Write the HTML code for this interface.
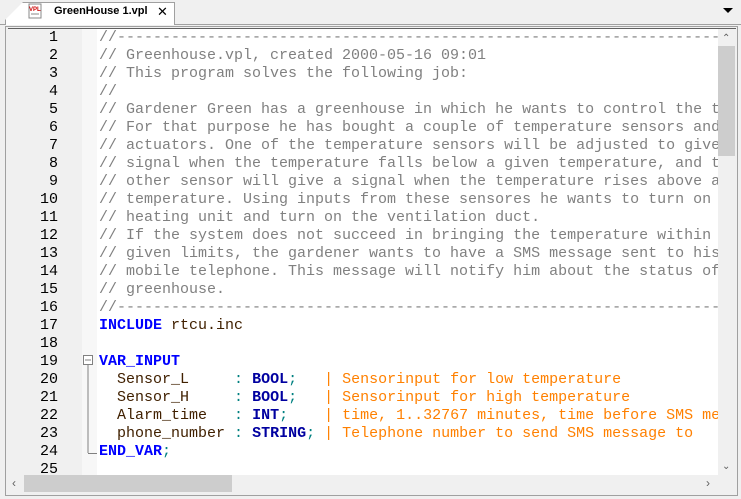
<!DOCTYPE html>
<html><head><style>
body{margin:0;width:741px;height:499px;background:#f0f0f0;position:relative;overflow:hidden;font-family:"Liberation Sans",sans-serif}
.tabbar{position:absolute;left:0;top:0;width:741px;height:24px;background:#f0f0f0;border-bottom:1px solid #a0a0a0}
.tab{position:absolute;left:5px;top:2px;width:168px;height:22px;background:#fff;border:1px solid #a0a0a0;border-bottom:none;clip-path:polygon(18px 0,100% 0,100% 100%,0 100%,0 18px)}
.tabtitle{position:absolute;left:54px;top:5px;font-size:11px;font-weight:bold;color:#000}
.x{position:absolute;left:157px;top:4px;font-size:13px}
.frame{position:absolute;left:5px;top:26px;width:731px;height:468px;border:1px solid #a0a0a0;background:#f0f0f0}
.gutter{position:absolute;left:8px;top:29px;width:74px;height:446px;background:#f0f0f0}
.fold{position:absolute;left:82px;top:29px;width:15px;height:446px;background:#f7f7f7}
.code{position:absolute;left:97px;top:29px;width:621px;height:446px;background:#fff;overflow:hidden}
.ln{position:absolute;left:8px;width:50px;text-align:right;font:15px/18px "Liberation Mono",monospace;color:#000}
.l{position:absolute;left:99px;white-space:pre;font:15px/18px "Liberation Mono",monospace;color:#808080}
.k{color:#0000ff;font-weight:bold}.t{color:#0000a0;font-weight:bold}.p{color:#008080}.i{color:#402000}.o{color:#ff8000}
.vs{position:absolute;left:718px;top:29px;width:17px;height:446px;background:#f0f0f0}
.hs{position:absolute;left:8px;top:475px;width:710px;height:17px;background:#f0f0f0}
</style></head><body>
<div class="tabbar"></div>
<div class="tab"></div>
<svg style="position:absolute;left:26px;top:3px" width="18" height="18"><rect x="3" y="1" width="12" height="14" fill="#fff" stroke="#888"/><text x="3" y="8" font-size="6" font-weight="bold" fill="#c00" font-family="Liberation Sans">VPL</text><line x1="5" y1="11" x2="13" y2="11" stroke="#888"/></svg>
<div class="tabtitle">GreenHouse 1.vpl</div>
<div class="x">✕</div>
<svg style="position:absolute;left:723px;top:8px" width="10" height="6"><polygon points="0,0 10,0 5,5" fill="#000"/></svg>
<div class="frame"></div>
<div style="position:absolute;left:8px;top:28px;width:728px;height:1px;background:#606060"></div>
<div class="gutter"></div><div class="fold"></div><div class="code"></div>
<div class="vs"></div>
<div style="position:absolute;left:718px;top:46px;width:17px;height:110px;background:#cdcdcd"></div>
<div style="position:absolute;left:722px;top:33px;font-size:10px;color:#606060">⌃</div>
<div style="position:absolute;left:722px;top:461px;font-size:10px;color:#606060">⌄</div>
<div class="hs"></div>
<div style="position:absolute;left:24px;top:475px;width:208px;height:17px;background:#cdcdcd"></div>
<div style="position:absolute;left:12px;top:476px;font-size:12px;color:#606060">‹</div>
<div style="position:absolute;left:706px;top:476px;font-size:12px;color:#606060">›</div>
<svg style="position:absolute;left:82px;top:354px" width="15" height="104"><rect x="1.5" y="1.5" width="9" height="9" fill="#fff" stroke="#808080"/><line x1="3" y1="6" x2="9" y2="6" stroke="#808080"/><line x1="6" y1="11" x2="6" y2="99" stroke="#808080"/><line x1="6" y1="99.5" x2="15" y2="99.5" stroke="#808080"/></svg>
<div class="ln" style="top:29px">1</div><div class="ln" style="top:47px">2</div><div class="ln" style="top:65px">3</div><div class="ln" style="top:83px">4</div><div class="ln" style="top:101px">5</div><div class="ln" style="top:119px">6</div><div class="ln" style="top:137px">7</div><div class="ln" style="top:155px">8</div><div class="ln" style="top:173px">9</div><div class="ln" style="top:191px">10</div><div class="ln" style="top:209px">11</div><div class="ln" style="top:227px">12</div><div class="ln" style="top:245px">13</div><div class="ln" style="top:263px">14</div><div class="ln" style="top:281px">15</div><div class="ln" style="top:299px">16</div><div class="ln" style="top:317px">17</div><div class="ln" style="top:335px">18</div><div class="ln" style="top:353px">19</div><div class="ln" style="top:371px">20</div><div class="ln" style="top:389px">21</div><div class="ln" style="top:407px">22</div><div class="ln" style="top:425px">23</div><div class="ln" style="top:443px">24</div><div class="ln" style="top:461px;height:14px;overflow:hidden">25</div>
<div style="position:absolute;left:97px;top:29px;width:621px;height:446px;overflow:hidden">
<div style="position:relative;left:-97px;top:-29px">
<div class="l" style="top:29px">//--------------------------------------------------------------------------</div>
<div class="l" style="top:47px">// Greenhouse.vpl, created 2000-05-16 09:01</div>
<div class="l" style="top:65px">// This program solves the following job:</div>
<div class="l" style="top:83px">//</div>
<div class="l" style="top:101px">// Gardener Green has a greenhouse in which he wants to control the t</div>
<div class="l" style="top:119px">// For that purpose he has bought a couple of temperature sensors and</div>
<div class="l" style="top:137px">// actuators. One of the temperature sensors will be adjusted to give</div>
<div class="l" style="top:155px">// signal when the temperature falls below a given temperature, and t</div>
<div class="l" style="top:173px">// other sensor will give a signal when the temperature rises above a</div>
<div class="l" style="top:191px">// temperature. Using inputs from these sensores he wants to turn on</div>
<div class="l" style="top:209px">// heating unit and turn on the ventilation duct.</div>
<div class="l" style="top:227px">// If the system does not succeed in bringing the temperature within</div>
<div class="l" style="top:245px">// given limits, the gardener wants to have a SMS message sent to his</div>
<div class="l" style="top:263px">// mobile telephone. This message will notify him about the status of</div>
<div class="l" style="top:281px">// greenhouse.</div>
<div class="l" style="top:299px">//--------------------------------------------------------------------------</div>
<div class="l" style="top:317px"><span class="k">INCLUDE</span> <span class="i">rtcu.inc</span></div>
<div class="l" style="top:353px"><span class="k">VAR_INPUT</span></div>
<div class="l" style="top:371px"><span class="i">  Sensor_L     </span><span class="p">:</span> <span class="t">BOOL</span><span class="p">;</span>   <span class="o">| Sensorinput for low temperature</span></div>
<div class="l" style="top:389px"><span class="i">  Sensor_H     </span><span class="p">:</span> <span class="t">BOOL</span><span class="p">;</span>   <span class="o">| Sensorinput for high temperature</span></div>
<div class="l" style="top:407px"><span class="i">  Alarm_time   </span><span class="p">:</span> <span class="t">INT</span><span class="p">;</span>    <span class="o">| time, 1..32767 minutes, time before SMS me</span></div>
<div class="l" style="top:425px"><span class="i">  phone_number </span><span class="p">:</span> <span class="t">STRING</span><span class="p">;</span> <span class="o">| Telephone number to send SMS message to</span></div>
<div class="l" style="top:443px"><span class="k">END_VAR</span><span class="p">;</span></div>
</div></div>
</body></html>
